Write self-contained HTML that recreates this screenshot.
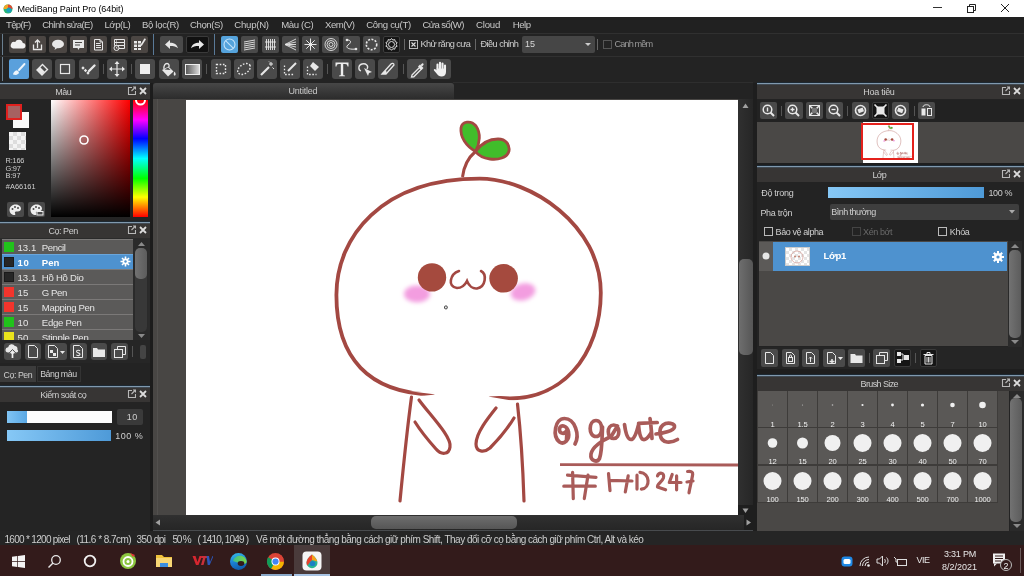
<!DOCTYPE html>
<html><head><meta charset="utf-8">
<style>
*{box-sizing:border-box;margin:0;padding:0}
body{width:1024px;height:576px;overflow:hidden;background:#222;position:relative;will-change:transform;font-family:"Liberation Sans",sans-serif;color:#d0d0d0}
.a{position:absolute;display:block}
.t{position:absolute;white-space:nowrap;line-height:1}
</style></head><body>
<div class="a" style="left:0px;top:0px;width:1024px;height:17px;background:#fff;"></div>
<svg class="a" style="left:3px;top:4px" width="10" height="10" viewBox="0 0 10 10"><circle cx="5" cy="5" r="4.5" fill="#2bb673"/><path d="M5 0.5 A4.5 4.5 0 0 1 9.5 5 L5 5Z" fill="#e8452c"/><path d="M0.5 5 A4.5 4.5 0 0 1 5 0.5 L5 5Z" fill="#f5a623"/><circle cx="6" cy="6" r="2.6" fill="#1aa0b8"/></svg>
<div class="t" style="left:17.5px;top:5.0px;font-size:9.0px;color:#000;;letter-spacing:-0.087px">MediBang Paint Pro (64bit)</div>
<div class="a" style="left:933px;top:7px;width:9px;height:1px;background:#333;"></div>
<svg class="a" style="left:966px;top:3px" width="11" height="10" viewBox="0 0 11 10"><rect x="1.5" y="3.5" width="6" height="6" fill="none" stroke="#222"/><path d="M3.5 3.5V1.5H9.5V7.5H7.5" fill="none" stroke="#222"/></svg>
<svg class="a" style="left:1000px;top:3px" width="10" height="10" viewBox="0 0 10 10"><path d="M1 1L9 9M9 1L1 9" stroke="#222" stroke-width="1"/></svg>
<div class="a" style="left:0px;top:17px;width:1024px;height:16px;background:#212121;"></div>
<div class="t" style="left:6.1px;top:20.3px;font-size:9.6px;color:#c8c8c8;;letter-spacing:-0.714px">Tệp(F)</div>
<div class="t" style="left:42.2px;top:20.3px;font-size:9.6px;color:#c8c8c8;;letter-spacing:-0.557px">Chỉnh sửa(E)</div>
<div class="t" style="left:104.5px;top:20.3px;font-size:9.6px;color:#c8c8c8;;letter-spacing:-0.484px">Lớp(L)</div>
<div class="t" style="left:142.0px;top:20.3px;font-size:9.6px;color:#c8c8c8;;letter-spacing:-0.343px">Bộ lọc(R)</div>
<div class="t" style="left:190.0px;top:20.3px;font-size:9.6px;color:#c8c8c8;;letter-spacing:-0.433px">Chọn(S)</div>
<div class="t" style="left:234.3px;top:20.3px;font-size:9.6px;color:#c8c8c8;;letter-spacing:-0.252px">Chụp(N)</div>
<div class="t" style="left:281.25px;top:20.3px;font-size:9.6px;color:#c8c8c8;;letter-spacing:-0.372px">Màu (C)</div>
<div class="t" style="left:325.0px;top:20.3px;font-size:9.6px;color:#c8c8c8;;letter-spacing:-0.494px">Xem(V)</div>
<div class="t" style="left:366.25px;top:20.3px;font-size:9.6px;color:#c8c8c8;;letter-spacing:-0.343px">Công cụ(T)</div>
<div class="t" style="left:422.5px;top:20.3px;font-size:9.6px;color:#c8c8c8;;letter-spacing:-0.626px">Cửa sổ(W)</div>
<div class="t" style="left:476.0px;top:20.3px;font-size:9.6px;color:#c8c8c8;;letter-spacing:-0.206px">Cloud</div>
<div class="t" style="left:512.75px;top:20.3px;font-size:9.6px;color:#c8c8c8;;letter-spacing:-0.484px">Help</div>
<div class="a" style="left:0px;top:33px;width:1024px;height:1px;background:#303030;"></div>
<div class="a" style="left:0px;top:34px;width:1024px;height:22px;background:#232323;"></div>
<div class="a" style="left:0px;top:56px;width:1024px;height:1px;background:#303030;"></div>
<div class="a" style="left:0px;top:57px;width:1024px;height:26px;background:#232323;"></div>
<div class="a" style="left:2px;top:34px;width:1px;height:21px;background:#6a7f90;"></div>
<div class="a" style="left:2px;top:57px;width:1px;height:24px;background:#6a7f90;"></div>
<div class="a" style="left:9px;top:36px;width:17px;height:17px;background:#4b4643;border-radius:2px;"></div><svg class="a" style="left:9px;top:36px" width="17" height="17" viewBox="0 0 17 17"><path d="M4 12.5h9.5a2.8 2.8 0 0 0 .3-5.6 a4 4 0 0 0-7.6-.8 a3.2 3.2 0 0 0-2.2 6.4z" fill="#f0f0f0"/></svg>
<div class="a" style="left:29px;top:36px;width:17px;height:17px;background:#4b4643;border-radius:2px;"></div><svg class="a" style="left:29px;top:36px" width="17" height="17" viewBox="0 0 17 17"><path d="M4.5 8.5v5h8v-5" stroke="#e8e8e8" fill="none" stroke-width="1.3"/><path d="M8.5 12V4M6 6.5l2.5-2.5 2.5 2.5" stroke="#e8e8e8" fill="none" stroke-width="1.3"/></svg>
<div class="a" style="left:49px;top:36px;width:18px;height:17px;background:#4b4643;border-radius:2px;"></div><svg class="a" style="left:49px;top:36px" width="18" height="17" viewBox="0 0 18 17"><ellipse cx="9" cy="8" rx="6" ry="4.3" fill="#e8e8e8"/><path d="M6.5 11l-1 3 3.5-2.5z" fill="#e8e8e8"/></svg>
<div class="a" style="left:70px;top:36px;width:17px;height:17px;background:#4b4643;border-radius:2px;"></div><svg class="a" style="left:70px;top:36px" width="17" height="17" viewBox="0 0 17 17"><rect x="3" y="4" width="11" height="8" fill="#e8e8e8"/><path d="M7.5 12l1 2 1-2z" fill="#e8e8e8"/><path d="M5 6.5h7M5 9h5" stroke="#4b4846" stroke-width="1"/></svg>
<div class="a" style="left:90px;top:36px;width:17px;height:17px;background:#4b4643;border-radius:2px;"></div><svg class="a" style="left:90px;top:36px" width="17" height="17" viewBox="0 0 17 17"><path d="M4.5 3.5h5.5l2.5 2.5v8h-8z" stroke="#e8e8e8" fill="none"/><path d="M10 3.5v2.5h2.5" stroke="#e8e8e8" fill="none"/><path d="M6 7.5h4.5M6 9.5h5M6 11.5h5" stroke="#e8e8e8" fill="none"/></svg>
<div class="a" style="left:111px;top:36px;width:17px;height:17px;background:#4b4643;border-radius:2px;"></div><svg class="a" style="left:111px;top:36px" width="17" height="17" viewBox="0 0 17 17"><path d="M3.5 3.5h10v3h-10zM3.5 6.5h10v3h-10zM7.5 9.5h6v3h-6" stroke="#e8e8e8" fill="none"/><path d="M5 5h1M5 8h1" stroke="#e8e8e8" fill="none"/><circle cx="5.5" cy="12" r="2.5" fill="#4b4643" stroke="#e8e8e8" fill="none"/><path d="M5.5 10.8v1.4h1" stroke="#e8e8e8" stroke-width="0.8" fill="none"/></svg>
<div class="a" style="left:131px;top:36px;width:17px;height:17px;background:#4b4643;border-radius:2px;"></div><svg class="a" style="left:131px;top:36px" width="17" height="17" viewBox="0 0 17 17"><path d="M3 5h3v2.5h-3zM7 5h3v2.5h-3zM3 8.5h3v2.5h-3zM7 8.5h3v2.5h-3zM3 12h3v2h-3zM7 12h3v2h-3z" fill="#e8e8e8"/><path d="M10 9.5l3.5-5.5" stroke="#e8e8e8" stroke-width="1.6"/><circle cx="13.8" cy="3.6" r="1" fill="#e8e8e8"/></svg>
<div class="a" style="left:153px;top:34px;width:1px;height:21px;background:#5a7a98;"></div>
<div class="a" style="left:160px;top:36px;width:23px;height:17px;background:#4a4a4a;border-radius:2px;"></div><svg class="a" style="left:160px;top:36px" width="23" height="17" viewBox="0 0 23 17"><path d="M5 8.5l5-4.5v2.8c4 0 7 1.6 8 5.5c-1.8-1.8-4-2.3-8-2.3v3z" fill="#e8e8e8"/></svg>
<div class="a" style="left:186px;top:36px;width:23px;height:17px;background:#111;border-radius:2px;border:1px solid #3a3a3a;"></div><svg class="a" style="left:186px;top:36px" width="23" height="17" viewBox="0 0 23 17"><path d="M18 8.5l-5-4.5v2.8c-4 0-7 1.6-8 5.5c1.8-1.8 4-2.3 8-2.3v3z" fill="#e8e8e8"/></svg>
<div class="a" style="left:214px;top:34px;width:1px;height:21px;background:#5a7a98;"></div>
<div class="a" style="left:221px;top:36px;width:17px;height:17px;background:#55a3dc;border-radius:2px;"></div><svg class="a" style="left:221px;top:36px" width="17" height="17" viewBox="0 0 17 17"><circle cx="8.5" cy="8.5" r="5.5" stroke="#c4e2fa" fill="none" stroke-width="1.1"/><path d="M4.8 4.8l7.4 7.4" stroke="#c4e2fa" stroke-width="1.1"/></svg>
<div class="a" style="left:241px;top:36px;width:17px;height:17px;background:#4a4a4a;border-radius:2px;"></div><svg class="a" style="left:241px;top:36px" width="17" height="17" viewBox="0 0 17 17"><path d="M3 6l11-2M3 8l11-2M3 10l11-2M3 12l11-2M3 14l11-2" stroke="#e8e8e8" fill="none" stroke-width="0.9"/></svg>
<div class="a" style="left:262px;top:36px;width:17px;height:17px;background:#4a4a4a;border-radius:2px;"></div><svg class="a" style="left:262px;top:36px" width="17" height="17" viewBox="0 0 17 17"><path d="M4.5 3v11M6.5 3v11M8.5 3v11M10.5 3v11M12.5 3v11M3 6h11M3 11h11" stroke="#e8e8e8" fill="none" stroke-width="0.9"/></svg>
<div class="a" style="left:282px;top:36px;width:17px;height:17px;background:#4a4a4a;border-radius:2px;"></div><svg class="a" style="left:282px;top:36px" width="17" height="17" viewBox="0 0 17 17"><path d="M3 8.5L14 3M3 8.5L14 6M3 8.5L14 11M3 8.5L14 14M3 8.5L14 8.5" stroke="#e8e8e8" fill="none" stroke-width="0.9"/></svg>
<div class="a" style="left:302px;top:36px;width:17px;height:17px;background:#4a4a4a;border-radius:2px;"></div><svg class="a" style="left:302px;top:36px" width="17" height="17" viewBox="0 0 17 17"><path d="M8.5 2.5v12M2.5 8.5h12M4.3 4.3l8.4 8.4M12.7 4.3l-8.4 8.4" stroke="#e8e8e8" fill="none" stroke-width="1"/></svg>
<div class="a" style="left:322px;top:36px;width:17px;height:17px;background:#4a4a4a;border-radius:2px;"></div><svg class="a" style="left:322px;top:36px" width="17" height="17" viewBox="0 0 17 17"><circle cx="9" cy="8.5" r="6" stroke="#e8e8e8" fill="none" stroke-width="0.9"/><circle cx="9" cy="8.5" r="4" stroke="#e8e8e8" fill="none" stroke-width="0.9"/><circle cx="9" cy="8.5" r="2" stroke="#e8e8e8" fill="none" stroke-width="0.9"/></svg>
<div class="a" style="left:343px;top:36px;width:17px;height:17px;background:#4a4a4a;border-radius:2px;"></div><svg class="a" style="left:343px;top:36px" width="17" height="17" viewBox="0 0 17 17"><path d="M4 4c5 0 4 3 1 5s0 5 8 4" stroke="#e8e8e8" fill="none" stroke-width="1"/><circle cx="4" cy="4" r="1.3" fill="#e8e8e8"/><circle cx="13" cy="13" r="1.3" fill="#e8e8e8"/></svg>
<div class="a" style="left:363px;top:36px;width:17px;height:17px;background:#4a4a4a;border-radius:2px;"></div><svg class="a" style="left:363px;top:36px" width="17" height="17" viewBox="0 0 17 17"><circle cx="8.5" cy="8.5" r="5.2" stroke="#e8e8e8" fill="none" stroke-width="1.6" stroke-dasharray="2 1.4"/></svg>
<div class="a" style="left:383px;top:36px;width:17px;height:17px;background:#151515;border-radius:2px;border:1px solid #3c3c3c;"></div><svg class="a" style="left:383px;top:36px" width="17" height="17" viewBox="0 0 17 17"><circle cx="8.5" cy="8.5" r="3" stroke="#ddd" fill="none"/><path d="M8.5 2.5l1.3 1.6 2-.5.4 2 1.9.9-1 1.9 1 1.9-1.9.9-.4 2-2-.5-1.3 1.6-1.3-1.6-2 .5-.4-2-1.9-.9 1-1.9-1-1.9 1.9-.9.4-2 2 .5z" stroke="#ddd" fill="none"/></svg>
<div class="a" style="left:404px;top:39px;width:1px;height:11px;background:#666;"></div>
<div class="a" style="left:409px;top:40px;width:9px;height:9px;border:1px solid #bbb"></div>
<svg class="a" style="left:409px;top:40px" width="9" height="9" viewBox="0 0 9 9"><path d="M2.5 2.5l4 4M6.5 2.5l-4 4" stroke="#ddd" stroke-width="1.1"/></svg>
<div class="t" style="left:420.5px;top:40.0px;font-size:9.2px;color:#d0d0d0;;letter-spacing:-0.579px">Khử răng cưa</div>
<div class="a" style="left:475px;top:39px;width:1px;height:11px;background:#666;"></div>
<div class="t" style="left:480.5px;top:40.0px;font-size:9.2px;color:#d0d0d0;;letter-spacing:-0.562px">Điều chỉnh</div>
<div class="a" style="left:522px;top:36px;width:73px;height:17px;background:#464646;border-radius:2px"></div>
<div class="t" style="left:525px;top:40.0px;font-size:9.0px;color:#d8d8d8;">15</div>
<svg class="a" style="left:584px;top:42px" width="8" height="5" viewBox="0 0 8 5"><path d="M1 1h6l-3 3z" fill="#ccc"/></svg>
<div class="a" style="left:597px;top:39px;width:1px;height:11px;background:#666;"></div>
<div class="a" style="left:603px;top:40px;width:9px;height:9px;border:1px solid #555"></div>
<div class="t" style="left:614.5px;top:40.0px;font-size:9.2px;color:#999;;letter-spacing:-0.892px">Canh mềm</div>
<div class="a" style="left:9px;top:59px;width:20px;height:20px;background:#5aa0dc;border-radius:2px;"></div><svg class="a" style="left:9px;top:59px" width="20" height="20" viewBox="0 0 20 20"><path d="M10 11L15.5 5" stroke="#eef5fc" stroke-width="1.9" stroke-linecap="round"/><path d="M4 15.5c.3-2 1.8-4 4-4.3l2 1.9c-.4 2.2-2.3 3.6-6 2.4z" fill="#eef5fc"/></svg>
<div class="a" style="left:32px;top:59px;width:20px;height:20px;background:#4a4a4a;border-radius:3px;"></div><svg class="a" style="left:32px;top:59px" width="20" height="20" viewBox="0 0 20 20"><path d="M10.5 5.5l5 5-5.5 5.5-5-5z" stroke="#e8e8e8" fill="none" stroke-width="1.4"/><path d="M5 11l3-3 4.8 4.8-3 3z" fill="#e8e8e8"/></svg>
<div class="a" style="left:55px;top:59px;width:20px;height:20px;background:#4a4a4a;border-radius:3px;"></div><svg class="a" style="left:55px;top:59px" width="20" height="20" viewBox="0 0 20 20"><rect x="5.5" y="5.5" width="9" height="9" stroke="#e8e8e8" fill="none" stroke-width="1.2"/></svg>
<div class="a" style="left:79px;top:59px;width:20px;height:20px;background:#4a4a4a;border-radius:3px;"></div><svg class="a" style="left:79px;top:59px" width="20" height="20" viewBox="0 0 20 20"><path d="M10 12L15.5 6.5" stroke="#e8e8e8" stroke-width="2.4" stroke-linecap="round"/><rect x="2.8" y="7.8" width="2.4" height="2.4" transform="rotate(45 4 9)" fill="#e8e8e8"/><rect x="5.3" y="10.3" width="2.4" height="2.4" transform="rotate(45 6.5 11.5)" fill="#e8e8e8"/><rect x="7.8" y="12.8" width="2.4" height="2.4" transform="rotate(45 9 14)" fill="#e8e8e8"/></svg>
<div class="a" style="left:107px;top:59px;width:20px;height:20px;background:#4a4a4a;border-radius:3px;"></div><svg class="a" style="left:107px;top:59px" width="20" height="20" viewBox="0 0 20 20"><path d="M10 3v14M3 10h14" stroke="#e8e8e8" fill="none" stroke-width="1.2"/><path d="M10 2l-2.5 3h5zM10 18l-2.5-3h5zM2 10l3-2.5v5zM18 10l-3-2.5v5z" fill="#e8e8e8"/></svg>
<div class="a" style="left:135px;top:59px;width:20px;height:20px;background:#4a4a4a;border-radius:3px;"></div><svg class="a" style="left:135px;top:59px" width="20" height="20" viewBox="0 0 20 20"><rect x="5" y="5" width="10" height="10" fill="#eee"/></svg>
<div class="a" style="left:159px;top:59px;width:20px;height:20px;background:#4a4a4a;border-radius:3px;"></div><svg class="a" style="left:159px;top:59px" width="20" height="20" viewBox="0 0 20 20"><path d="M3 11l6.5-3.5 5 5L9 17.5z" fill="#e8e8e8"/><path d="M5.5 10.5l3.5-2 2.5 2.6z" fill="#4a4a4a"/><path d="M5 10c-.5-3 1-5.5 3-5.5s2.5 2 1.8 3.5" stroke="#e8e8e8" fill="none" stroke-width="1.3"/><path d="M15.5 12.5c1.3 1.8 1.8 3.6.3 4.2-1.5-.3-1.3-2.4-.3-4.2z" fill="#e8e8e8"/></svg>
<div class="a" style="left:182px;top:59px;width:20px;height:20px;background:#4a4a4a;border-radius:3px;"></div><svg class="a" style="left:182px;top:59px" width="20" height="20" viewBox="0 0 20 20"><defs><linearGradient id="g1"><stop offset="0" stop-color="#555"/><stop offset="1" stop-color="#ddd"/></linearGradient></defs><rect x="3.5" y="5.5" width="14" height="10" fill="url(#g1)" stroke="#eee"/></svg>
<div class="a" style="left:211px;top:59px;width:20px;height:20px;background:#4a4a4a;border-radius:3px;"></div><svg class="a" style="left:211px;top:59px" width="20" height="20" viewBox="0 0 20 20"><rect x="5.5" y="5.5" width="9" height="9" stroke="#e8e8e8" fill="none" stroke-width="1.4" stroke-dasharray="1.6 1.6"/></svg>
<div class="a" style="left:234px;top:59px;width:20px;height:20px;background:#4a4a4a;border-radius:3px;"></div><svg class="a" style="left:234px;top:59px" width="20" height="20" viewBox="0 0 20 20"><ellipse cx="10" cy="10" rx="7" ry="4.5" transform="rotate(-35 10 10)" stroke="#e8e8e8" fill="none" stroke-width="1.4" stroke-dasharray="1.6 1.6"/></svg>
<div class="a" style="left:257px;top:59px;width:20px;height:20px;background:#4a4a4a;border-radius:3px;"></div><svg class="a" style="left:257px;top:59px" width="20" height="20" viewBox="0 0 20 20"><path d="M4 16L12 8" stroke="#e8e8e8" stroke-width="2.2"/><path d="M14 3v4M12 5h4M15.5 8.5l1.5 1.5M12 2.5l1 1" stroke="#e8e8e8" fill="none"/></svg>
<div class="a" style="left:280px;top:59px;width:20px;height:20px;background:#4a4a4a;border-radius:3px;"></div><svg class="a" style="left:280px;top:59px" width="20" height="20" viewBox="0 0 20 20"><path d="M4.5 6.5v9h9" stroke="#e8e8e8" fill="none" stroke-width="1.3" stroke-dasharray="1.6 1.6"/><path d="M8 12L16 4" stroke="#e8e8e8" stroke-width="2"/></svg>
<div class="a" style="left:303px;top:59px;width:20px;height:20px;background:#4a4a4a;border-radius:3px;"></div><svg class="a" style="left:303px;top:59px" width="20" height="20" viewBox="0 0 20 20"><path d="M4.5 7.5v8h9" stroke="#e8e8e8" fill="none" stroke-width="1.3" stroke-dasharray="1.6 1.6"/><path d="M10 3l6 5-4 4-5-5z" fill="#e8e8e8"/></svg>
<div class="a" style="left:332px;top:59px;width:20px;height:20px;background:#4a4a4a;border-radius:3px;"></div><svg class="a" style="left:332px;top:59px" width="20" height="20" viewBox="0 0 20 20"><path d="M3.5 3.5h13v4h-1c-.3-1.8-.8-2.5-2.5-2.5h-1.8v10.5c0 .8.4 1 1.8 1v.8h-6v-.8c1.4 0 1.8-.2 1.8-1V5h-1.8c-1.7 0-2.2.7-2.5 2.5h-1z" fill="#eee"/></svg>
<div class="a" style="left:355px;top:59px;width:20px;height:20px;background:#4a4a4a;border-radius:3px;"></div><svg class="a" style="left:355px;top:59px" width="20" height="20" viewBox="0 0 20 20"><path d="M6 12c-3-1-3-6 1-7 4-1 7 2 5 5" stroke="#e8e8e8" fill="none" stroke-width="1.3"/><path d="M9 9l8 4-3 1-1 3z" fill="#e8e8e8"/></svg>
<div class="a" style="left:378px;top:59px;width:20px;height:20px;background:#4a4a4a;border-radius:3px;"></div><svg class="a" style="left:378px;top:59px" width="20" height="20" viewBox="0 0 20 20"><path d="M4 15l9-10c1-1 3-1 3 1l-8 9z" stroke="#e8e8e8" fill="none" stroke-width="1.3"/><path d="M4 15l4-4 1 4z" fill="#e8e8e8"/></svg>
<div class="a" style="left:407px;top:59px;width:20px;height:20px;background:#4a4a4a;border-radius:3px;"></div><svg class="a" style="left:407px;top:59px" width="20" height="20" viewBox="0 0 20 20"><path d="M5 16l7.5-7.5 1.8 1.8L6.8 17.8 4.5 18z" stroke="#e8e8e8" fill="none" stroke-width="1.3"/><path d="M11 7.5l2-2 3.5 3.5-2 2z" fill="#e8e8e8"/><path d="M13.5 6l1.5-1.5c.8-.8 2.2.6 1.4 1.4L15 7.5z" fill="#e8e8e8"/></svg>
<div class="a" style="left:430px;top:59px;width:21px;height:20px;background:#4a4a4a;border-radius:3px;"></div><svg class="a" style="left:430px;top:59px" width="21" height="20" viewBox="0 0 21 20"><path d="M7.5 10V5.5M10 9.5V3.8M12.5 9.5V4.5M15 10.5V6.5" stroke="#f0f0f0" stroke-width="2.1" stroke-linecap="round"/><path d="M6.5 9.5h9.5v3.5c0 3-2 4.5-4.5 4.5c-2.2 0-3.5-1-4.5-2.5L4 11.5c-.6-1 .4-2 1.4-1.3l1.1 1z" fill="#f0f0f0"/></svg>
<div class="a" style="left:103px;top:64px;width:1px;height:10px;background:#555;"></div>
<div class="a" style="left:131px;top:64px;width:1px;height:10px;background:#555;"></div>
<div class="a" style="left:206px;top:64px;width:1px;height:10px;background:#555;"></div>
<div class="a" style="left:327px;top:64px;width:1px;height:10px;background:#555;"></div>
<div class="a" style="left:403px;top:64px;width:1px;height:10px;background:#555;"></div>
<div class="a" style="left:0px;top:83px;width:150px;height:448px;background:#242424;"></div>
<div class="a" style="left:150px;top:83px;width:3px;height:448px;background:#1c1c1c;"></div>
<div class="a" style="left:0px;top:82px;width:150px;height:1px;background:#1d2933;"></div>
<div class="a" style="left:0px;top:84px;width:150px;height:15px;background:#373534;"></div>
<div class="a" style="left:0px;top:83px;width:150px;height:1px;background:#8099ae;"></div>
<div class="a" style="left:0px;top:84px;width:150px;height:1px;background:#414a53;"></div>
<div class="t" style="left:55.3px;top:87.5px;font-size:9.0px;color:#cfcfcf;;letter-spacing:-0.472px">Màu</div>
<svg class="a" style="left:127px;top:86px" width="9" height="9" viewBox="0 0 9 9"><path d="M5 1.5h-3.5v7h7v-3.5" stroke="#b8b8b8" fill="none" stroke-width="1.1"/><path d="M4.5 5L8 1.5M6 1h2.5v2.5" stroke="#b8b8b8" fill="none" stroke-width="1.1"/></svg>
<svg class="a" style="left:139px;top:86.5px" width="8" height="8" viewBox="0 0 8 8"><path d="M1 1l6 6M7 1l-6 6" stroke="#dcdcdc" stroke-width="1.8"/></svg>
<div class="a" style="left:13px;top:112px;width:16px;height:16px;background:#fafafa;"></div>
<div class="a" style="left:6px;top:104px;width:16px;height:16px;background:#A66161;border:2px solid #e0201e"></div>
<div class="a" style="left:9px;top:132px;width:17px;height:18px;background:#f4f4f4;background-image:linear-gradient(45deg,#ddd 25%,transparent 25%,transparent 75%,#ddd 75%),linear-gradient(45deg,#ddd 25%,transparent 25%,transparent 75%,#ddd 75%);background-size:8px 8px;background-position:0 0,4px 4px"></div>
<div class="t" style="left:5.5px;top:157.0px;font-size:7.4px;color:#cfcfcf;;letter-spacing:-0.187px">R:166</div>
<div class="t" style="left:5.5px;top:164.7px;font-size:7.4px;color:#cfcfcf;;letter-spacing:-0.258px">G:97</div>
<div class="t" style="left:5.5px;top:172.4px;font-size:7.4px;color:#cfcfcf;;letter-spacing:-0.055px">B:97</div>
<div class="t" style="left:5.8px;top:183.0px;font-size:7.4px;color:#cfcfcf;;letter-spacing:0.029px">#A66161</div>
<div class="a" style="left:7px;top:202px;width:17px;height:15px;background:#4a4a4a;border-radius:2px;"></div><svg class="a" style="left:7px;top:202px" width="17" height="15" viewBox="0 0 17 15"><path d="M8.5 2.5c-3.5 0-6 2.5-6 5.5 0 3 2.5 5 5 5 1 0 1-1 .5-1.8-.4-.8.2-1.6 1-1.6h1.7c2 0 3.3-1.2 3.3-3 0-2.4-2.4-4.1-5.5-4.1z" fill="#eee"/><circle cx="5.5" cy="7" r="1" fill="#4a4a4a"/><circle cx="8" cy="5" r="1" fill="#4a4a4a"/><circle cx="11" cy="6" r="1" fill="#4a4a4a"/></svg>
<div class="a" style="left:28px;top:202px;width:17px;height:15px;background:#4a4a4a;border-radius:2px;"></div><svg class="a" style="left:28px;top:202px" width="17" height="15" viewBox="0 0 17 15"><path d="M8.5 2.5c-3.5 0-6 2.5-6 5.5 0 3 2.5 5 5 5 1 0 1-1 .5-1.8-.4-.8.2-1.6 1-1.6h1.7c2 0 3.3-1.2 3.3-3 0-2.4-2.4-4.1-5.5-4.1z" fill="#eee"/><circle cx="5.5" cy="7" r="1" fill="#4a4a4a"/><circle cx="8" cy="5" r="1" fill="#4a4a4a"/><circle cx="11" cy="6" r="1" fill="#4a4a4a"/><rect x="9" y="9.5" width="6" height="3.5" fill="#4a4a4a" stroke="#eee" stroke-width="1"/></svg>
<div class="a" style="left:51px;top:100px;width:79px;height:117px;background:linear-gradient(to bottom,rgba(0,0,0,0),#000),linear-gradient(to right,#fff,#f00)"></div>
<svg class="a" style="left:78px;top:134px" width="12" height="12" viewBox="0 0 12 12"><circle cx="6" cy="6" r="4" stroke="#fff" stroke-width="1.6" fill="none"/></svg>
<div class="a" style="left:133px;top:100px;width:15px;height:117px;background:linear-gradient(to bottom,#f00 0%,#f0f 17%,#00f 33%,#0ff 50%,#0f0 67%,#ff0 83%,#f00 100%)"></div>
<div class="a" style="left:133px;top:100px;width:15px;height:117px;overflow:hidden"><svg class="a" style="left:0;top:-6px" width="15" height="14"><circle cx="7.5" cy="6" r="4.5" stroke="#fff" stroke-width="2" fill="none"/></svg></div>
<div class="a" style="left:0px;top:221px;width:150px;height:1px;background:#1d2933;"></div>
<div class="a" style="left:0px;top:223px;width:150px;height:15px;background:#373534;"></div>
<div class="a" style="left:0px;top:222px;width:150px;height:1px;background:#8099ae;"></div>
<div class="a" style="left:0px;top:223px;width:150px;height:1px;background:#414a53;"></div>
<div class="t" style="left:48.5px;top:226.5px;font-size:9.0px;color:#cfcfcf;;letter-spacing:-0.476px">Cọ: Pen</div>
<svg class="a" style="left:127px;top:225px" width="9" height="9" viewBox="0 0 9 9"><path d="M5 1.5h-3.5v7h7v-3.5" stroke="#b8b8b8" fill="none" stroke-width="1.1"/><path d="M4.5 5L8 1.5M6 1h2.5v2.5" stroke="#b8b8b8" fill="none" stroke-width="1.1"/></svg>
<svg class="a" style="left:139px;top:225.5px" width="8" height="8" viewBox="0 0 8 8"><path d="M1 1l6 6M7 1l-6 6" stroke="#dcdcdc" stroke-width="1.8"/></svg>
<div class="a" style="left:0px;top:238px;width:150px;height:104px;background:#2b2b2b;"></div>
<div class="a" style="left:2px;top:239px;width:131px;height:101px;overflow:hidden">
<div class="a" style="left:0;top:0px;width:131px;height:15px;background:#5b5a59;border-top:1px solid #7b7978"></div>
<div class="a" style="left:2px;top:3px;width:10px;height:10px;background:#21c21b;"></div>
<div class="t" style="left:15.5px;top:3.5px;font-size:9.6px;color:#e6e6e6;;letter-spacing:0.028px">13.1</div>
<div class="t" style="left:39.8px;top:3.5px;font-size:9.6px;color:#e6e6e6;;letter-spacing:-0.390px">Pencil</div>
<div class="a" style="left:0;top:15px;width:131px;height:15px;background:#4e92cf;border-top:1px solid #6aa6dc"></div>
<div class="a" style="left:2px;top:18px;width:10px;height:10px;background:#262626;border:1px solid #1a1a1a"></div>
<div class="t" style="left:15.5px;top:18.5px;font-size:9.6px;color:#ffffff;font-weight:bold;;letter-spacing:0.689px">10</div>
<div class="t" style="left:39.8px;top:18.5px;font-size:9.6px;color:#ffffff;font-weight:bold;;letter-spacing:-0.020px">Pen</div>
<svg class="a" style="left:118px;top:17px" width="11" height="11" viewBox="0 0 11 11"><circle cx="5.5" cy="5.5" r="3" fill="#fff"/><path d="M5.5 0.5v10M0.5 5.5h10M2 2l7 7M9 2l-7 7" stroke="#fff" stroke-width="1.6"/><circle cx="5.5" cy="5.5" r="1.2" fill="#4e92cf"/></svg>
<div class="a" style="left:0;top:30px;width:131px;height:15px;background:#5b5a59;border-top:1px solid #7b7978"></div>
<div class="a" style="left:2px;top:33px;width:10px;height:10px;background:#262626;border:1px solid #1a1a1a"></div>
<div class="t" style="left:15.5px;top:33.5px;font-size:9.6px;color:#e6e6e6;;letter-spacing:0.028px">13.1</div>
<div class="t" style="left:39.8px;top:33.5px;font-size:9.6px;color:#e6e6e6;;letter-spacing:-0.274px">Hồ Hồ Dio</div>
<div class="a" style="left:0;top:45px;width:131px;height:15px;background:#5b5a59;border-top:1px solid #7b7978"></div>
<div class="a" style="left:2px;top:48px;width:10px;height:10px;background:#f2342c;"></div>
<div class="t" style="left:15.5px;top:48.5px;font-size:9.6px;color:#e6e6e6;;letter-spacing:0.264px">15</div>
<div class="t" style="left:39.8px;top:48.5px;font-size:9.6px;color:#e6e6e6;;letter-spacing:-0.441px">G Pen</div>
<div class="a" style="left:0;top:60px;width:131px;height:15px;background:#5b5a59;border-top:1px solid #7b7978"></div>
<div class="a" style="left:2px;top:63px;width:10px;height:10px;background:#f2342c;"></div>
<div class="t" style="left:15.5px;top:63.5px;font-size:9.6px;color:#e6e6e6;;letter-spacing:0.264px">15</div>
<div class="t" style="left:39.8px;top:63.5px;font-size:9.6px;color:#e6e6e6;;letter-spacing:-0.341px">Mapping Pen</div>
<div class="a" style="left:0;top:75px;width:131px;height:15px;background:#5b5a59;border-top:1px solid #7b7978"></div>
<div class="a" style="left:2px;top:78px;width:10px;height:10px;background:#21c21b;"></div>
<div class="t" style="left:15.5px;top:78.5px;font-size:9.6px;color:#e6e6e6;;letter-spacing:0.264px">10</div>
<div class="t" style="left:39.8px;top:78.5px;font-size:9.6px;color:#e6e6e6;;letter-spacing:-0.295px">Edge Pen</div>
<div class="a" style="left:0;top:90px;width:131px;height:15px;background:#5b5a59;border-top:1px solid #7b7978"></div>
<div class="a" style="left:2px;top:93px;width:10px;height:10px;background:#e9e21c;"></div>
<div class="t" style="left:15.5px;top:93.5px;font-size:9.6px;color:#e6e6e6;;letter-spacing:0.264px">50</div>
<div class="t" style="left:39.8px;top:93.5px;font-size:9.6px;color:#e6e6e6;;letter-spacing:-0.207px">Stipple Pen</div>
</div>
<div class="a" style="left:134px;top:239px;width:14px;height:101px;background:#2a2a2a;"></div>
<svg class="a" style="left:137px;top:241px" width="9" height="6" viewBox="0 0 9 6"><path d="M1 5h7L4.5 1z" fill="#8a8a8a"/></svg>
<div class="a" style="left:135px;top:249px;width:12px;height:83px;background:#383838;border-radius:5px"></div>
<div class="a" style="left:135px;top:248px;width:12px;height:31px;background:linear-gradient(to right,#727272,#5c5c5c);border-radius:5px"></div>
<svg class="a" style="left:137px;top:333px" width="9" height="6" viewBox="0 0 9 6"><path d="M1 1h7L4.5 5z" fill="#8a8a8a"/></svg>
<div class="a" style="left:0px;top:340px;width:150px;height:23px;background:#262626;"></div>
<div class="a" style="left:4px;top:343px;width:17px;height:17px;background:#4a4a4a;border-radius:3px;"></div><svg class="a" style="left:4px;top:343px" width="17" height="17" viewBox="0 0 17 17"><path d="M4 9.5a2.6 2.6 0 0 1 .2-5.2a3.5 3.5 0 0 1 6.6-1.2a2.6 2.6 0 0 1 2.6 3.3a2 2 0 0 1-.6 3.1z" fill="#e8e8e8"/><path d="M8.5 6.5l-4 4.3h2.6v4.7h2.8v-4.7h2.6z" fill="#eee" stroke="#4a4a4a" stroke-width="1"/></svg>
<div class="a" style="left:25px;top:343px;width:16px;height:17px;background:#4a4a4a;border-radius:3px;"></div><svg class="a" style="left:25px;top:343px" width="16" height="17" viewBox="0 0 16 17"><path d="M3.5 2.5h6l3 3v9h-9z" stroke="#e8e8e8" fill="none"/></svg>
<div class="a" style="left:45px;top:343px;width:22px;height:17px;background:#4a4a4a;border-radius:3px;"></div><svg class="a" style="left:45px;top:343px" width="22" height="17" viewBox="0 0 22 17"><path d="M3.5 2.5h6l3 3v9h-9z" stroke="#e8e8e8" fill="none"/><rect x="5" y="7" width="3" height="3" fill="#e8e8e8"/><rect x="8" y="10" width="3" height="3" fill="#e8e8e8"/><path d="M15 8h5l-2.5 3z" fill="#e8e8e8"/></svg>
<div class="a" style="left:70px;top:343px;width:17px;height:17px;background:#4a4a4a;border-radius:3px;"></div><svg class="a" style="left:70px;top:343px" width="17" height="17" viewBox="0 0 17 17"><path d="M3.5 2.5h6l3 3v9h-9z" stroke="#e8e8e8" fill="none"/><path d="M10 8c-.5-1-3.5-1.2-3.5.5s3.5 1 3.5 2.8-3 1.6-3.6.5" stroke="#e8e8e8" fill="none" stroke-width="1.1"/></svg>
<div class="a" style="left:91px;top:343px;width:16px;height:17px;background:#4a4a4a;border-radius:3px;"></div><svg class="a" style="left:91px;top:343px" width="16" height="17" viewBox="0 0 16 17"><path d="M2 5h4l1 1.5h7v7.5h-12z" fill="#e8e8e8"/></svg>
<div class="a" style="left:111px;top:343px;width:17px;height:17px;background:#4a4a4a;border-radius:3px;"></div><svg class="a" style="left:111px;top:343px" width="17" height="17" viewBox="0 0 17 17"><rect x="3.5" y="6.5" width="8" height="8" stroke="#e8e8e8" fill="none"/><path d="M6.5 6.5v-3h8v8h-3" stroke="#e8e8e8" fill="none"/></svg>
<div class="a" style="left:132px;top:346px;width:1px;height:11px;background:#555;"></div>
<div class="a" style="left:140px;top:345px;width:6px;height:14px;background:#444;border-radius:2px"></div>
<div class="a" style="left:0px;top:363px;width:150px;height:23px;background:#232323;"></div>
<div class="a" style="left:0px;top:366px;width:36px;height:16px;background:#3c3c3c;"></div>
<div class="t" style="left:3.5px;top:370.5px;font-size:8.8px;color:#cfcfcf;;letter-spacing:-0.428px">Cọ: Pen</div>
<div class="a" style="left:37px;top:366px;width:44px;height:16px;background:#262626;border:1px solid #333"></div>
<div class="t" style="left:40.2px;top:369.5px;font-size:8.8px;color:#cfcfcf;;letter-spacing:-0.464px">Bảng màu</div>
<div class="a" style="left:0px;top:385px;width:150px;height:1px;background:#1d2933;"></div>
<div class="a" style="left:0px;top:387px;width:150px;height:15px;background:#373534;"></div>
<div class="a" style="left:0px;top:386px;width:150px;height:1px;background:#8099ae;"></div>
<div class="a" style="left:0px;top:387px;width:150px;height:1px;background:#414a53;"></div>
<div class="t" style="left:40.2px;top:390.5px;font-size:9.0px;color:#cfcfcf;;letter-spacing:-0.494px">Kiểm soát cọ</div>
<svg class="a" style="left:127px;top:389px" width="9" height="9" viewBox="0 0 9 9"><path d="M5 1.5h-3.5v7h7v-3.5" stroke="#b8b8b8" fill="none" stroke-width="1.1"/><path d="M4.5 5L8 1.5M6 1h2.5v2.5" stroke="#b8b8b8" fill="none" stroke-width="1.1"/></svg>
<svg class="a" style="left:139px;top:389.5px" width="8" height="8" viewBox="0 0 8 8"><path d="M1 1l6 6M7 1l-6 6" stroke="#dcdcdc" stroke-width="1.8"/></svg>
<div class="a" style="left:7px;top:411px;width:105px;height:12px;background:#fcfcfc"></div>
<div class="a" style="left:7px;top:411px;width:20px;height:12px;background:linear-gradient(to right,#80c4f4,#5aa8e4)"></div>
<div class="a" style="left:117px;top:409px;width:26px;height:16px;background:#3a3a3a;border-radius:2px"></div>
<div class="t" style="left:126.8px;top:413.0px;font-size:9.0px;color:#cfcfcf;;letter-spacing:0.492px">10</div>
<div class="a" style="left:7px;top:430px;width:104px;height:11px;background:linear-gradient(to right,#86c8f6,#4e9ad8)"></div>
<div class="t" style="left:115.2px;top:432.0px;font-size:9.0px;color:#cfcfcf;;letter-spacing:0.534px">100 %</div>
<div class="a" style="left:153px;top:83px;width:600px;height:16px;background:#232323;"></div>
<div class="a" style="left:453px;top:82px;width:300px;height:1px;background:#2e2e2e;"></div>
<div class="a" style="left:153px;top:83px;width:301px;height:16px;background:linear-gradient(to bottom,#474747,#2c2c2c);border-radius:3px 3px 0 0"></div>
<div class="t" style="left:288.5px;top:87.0px;font-size:9.0px;color:#c8c8c8;;letter-spacing:-0.202px">Untitled</div>
<div class="a" style="left:153px;top:99px;width:585px;height:416px;background:#484644;"></div>
<div class="a" style="left:157px;top:99px;width:1px;height:416px;background:#52504e;"></div>
<div class="a" style="left:186px;top:100px;width:552px;height:415px;background:#ffffff;"></div>
<svg class="a" style="left:186px;top:100px" width="552" height="415" viewBox="186 100 552 415"><defs><filter id="bl" x="-50%" y="-50%" width="200%" height="200%"><feGaussianBlur stdDeviation="2.2"/></filter></defs><ellipse cx="417" cy="294" rx="13" ry="8.5" fill="#f39de0" filter="url(#bl)"/><ellipse cx="523" cy="292" rx="12.5" ry="8.5" fill="#f39de0" transform="rotate(-15 523 292)" filter="url(#bl)"/><path d="M432.7 394.6 C368.8 392.9, 336.4 358.2, 336.4 295.1 C336.4 236.9, 381.4 178.6, 479.7 178.6 C530.5 178.6, 600.8 224.8, 600.8 292.7 C600.8 352.5, 562.9 408.6, 490.7 396.6" stroke="#a34842" stroke-width="3.8" fill="none" stroke-linecap="round"/><path d="M410 391.2 L436 392.3 L436 394.6 Z M410 396.9 L436 397.2 L436 394.6 Z" fill="#fff"/><path d="M516 395.3 L488 393.2 L488 396.6 Z M516 401.3 L488 400 L488 396.6 Z" fill="#fff"/><path d="M462.5 177 C464 165, 469 157, 475.5 151.5" stroke="#a34842" stroke-width="3" fill="none"/><path d="M475.5 151.5 C466 146, 460 137, 461 128 C462 121, 471 120, 476 126 C481 133, 480 143, 475.5 151.5Z" fill="#41bd2b" stroke="#a34842" stroke-width="2.8"/><path d="M475.5 151.5 C481 144, 489 139, 498 139 C506 139, 510 145, 509 151 C507 158, 498 160, 490 159 C483 158, 478 155, 475.5 151.5Z" fill="#41bd2b" stroke="#a34842" stroke-width="2.8"/><circle cx="432" cy="277.4" r="14.2" fill="#a54a3e"/><circle cx="503.6" cy="278.3" r="14.3" fill="#a54a3e"/><path d="M459 271 C450 274, 447 287, 457 288 C463 288, 466 283, 467 281 C469 286, 473 289, 477 288.5 C486 287, 487 274, 481 271" stroke="#a34842" stroke-width="2.6" fill="none" stroke-linecap="round"/><path d="M411.5 397 C407 430, 403 470, 400 501" stroke="#a34842" stroke-width="3.2" fill="none" stroke-linecap="round"/><path d="M517.5 404 C521 435, 523 470, 524 501" stroke="#a34842" stroke-width="3.2" fill="none" stroke-linecap="round"/><path d="M419 400 C430 415, 452 437, 450 447 C449 455, 441 455, 436 449 C428 440, 420 430, 415 422" stroke="#a34842" stroke-width="3.2" fill="none" stroke-linecap="round"/><path d="M496 408 C488 418, 476 433, 476 444 C476 452, 484 453, 490 448 C498 440, 508 428, 514 418" stroke="#a34842" stroke-width="3.2" fill="none" stroke-linecap="round"/><path d="M575 444 C580 435, 575 418.5, 564.5 418.5 C555 418.5, 552 436, 559.5 442 C564 445, 570 440, 568.5 432 C567 425, 560 424, 559.5 429 C559 434, 565 435, 567 430 L566.5 440" stroke="#a95b59" stroke-width="3.7" fill="none" stroke-linecap="round" stroke-linejoin="round"/><path d="M596 420.5 C588.5 420.5, 588 436.5, 596 436.5 C603.5 436.5, 603.5 420.5, 596 420.5Z" stroke="#a95b59" stroke-width="3.7" fill="none" stroke-linecap="round" stroke-linejoin="round"/><path d="M602.5 427 C602 440, 602 452, 599.5 458.5 C597 463, 590 461, 591 454 C592 447, 603 440, 609 437.5" stroke="#a95b59" stroke-width="3.7" fill="none" stroke-linecap="round" stroke-linejoin="round"/><path d="M613.7 425 C606.5 425, 606.5 438.5, 613.7 438.5 C620.5 438.5, 620.5 425, 613.7 425Z M610.5 437.5 L617.5 426" stroke="#a95b59" stroke-width="3.7" fill="none" stroke-linecap="round" stroke-linejoin="round"/><path d="M624.5 424.5 C625.5 432, 627.5 439.5, 631 439.5 C634.5 439.5, 637 431, 638.5 425 C639 431, 640 439, 643.5 439.5 C646.5 440, 649 436, 651 433" stroke="#a95b59" stroke-width="3.7" fill="none" stroke-linecap="round" stroke-linejoin="round"/><path d="M650 418.5 C651 425, 651.5 432, 652 438.5 M638.6 423.4 L657.2 422.5" stroke="#a95b59" stroke-width="3.7" fill="none" stroke-linecap="round" stroke-linejoin="round"/><path d="M656 434 C662 433.5, 674 431, 674.5 427 C675 423, 667 422, 663 425 C658 429, 659 441, 667 442 C671 442.5, 675 441, 677.5 439.5" stroke="#a95b59" stroke-width="3.7" fill="none" stroke-linecap="round" stroke-linejoin="round"/><path d="M560 464.6 L738 465" stroke="#a95b59" stroke-width="2.8"/><path d="M567.5 475.2 L596 477.4 M563.8 486.2 L595.3 486.2 M572.6 472.3 L573.3 498.6 M588 475.2 L584.3 498.6" stroke="#a95b59" stroke-width="3.2" fill="none" stroke-linecap="round" stroke-linejoin="round"/><path d="M608.5 473.7 L610 490.6 M609.2 480.3 L632 481 M628.2 475.9 L625.3 492" stroke="#a95b59" stroke-width="3.2" fill="none" stroke-linecap="round" stroke-linejoin="round"/><path d="M637 475.2 L637 489.1 M640 472.3 C650 473, 651 488, 641.4 489.1" stroke="#a95b59" stroke-width="3.2" fill="none" stroke-linecap="round" stroke-linejoin="round"/><path d="M657.5 475.9 C659 472, 665 472, 663.4 478 C662 482, 657 484, 657.5 486.9 L665.6 489.8" stroke="#a95b59" stroke-width="3.2" fill="none" stroke-linecap="round" stroke-linejoin="round"/><path d="M672.2 474.5 L669.3 482.5 L681 482.5 M676.6 475.9 L676.6 489.8" stroke="#a95b59" stroke-width="3.2" fill="none" stroke-linecap="round" stroke-linejoin="round"/><path d="M687.6 471.5 C691 471, 693 472, 692.7 474 C692 480, 690 486, 689 492.8 M687 482 L693 481" stroke="#a95b59" stroke-width="3.2" fill="none" stroke-linecap="round" stroke-linejoin="round"/><rect x="444.6" y="306" width="2.6" height="2.8" rx="0.8" fill="none" stroke="#222" stroke-width="0.9"/></svg>
<div class="a" style="left:738px;top:99px;width:15px;height:416px;background:linear-gradient(to right,#303030,#262626);"></div>
<svg class="a" style="left:741px;top:102px" width="9" height="7" viewBox="0 0 9 7"><path d="M1.5 6h6L4.5 1.5z" fill="#a0a0a0"/></svg>
<div class="a" style="left:739px;top:259px;width:14px;height:96px;background:linear-gradient(to right,#6e6e6e,#565656);border-radius:5px"></div>
<div class="a" style="left:738px;top:505px;width:15px;height:10px;background:#1e1e1e;"></div>
<svg class="a" style="left:741px;top:507px" width="9" height="7" viewBox="0 0 9 7"><path d="M1.5 1.5h6L4.5 6z" fill="#a0a0a0"/></svg>
<div class="a" style="left:153px;top:515px;width:600px;height:15px;background:linear-gradient(#303030,#262626);"></div>
<div class="a" style="left:153px;top:530px;width:600px;height:1px;background:#484b4e;"></div>
<svg class="a" style="left:154px;top:518px" width="8" height="9" viewBox="0 0 8 9"><path d="M6 1.5v6L1.5 4.5z" fill="#a0a0a0"/></svg>
<div class="a" style="left:371px;top:516px;width:146px;height:13px;background:linear-gradient(#6e6e6e,#565656);border-radius:5px"></div>
<div class="a" style="left:744px;top:515px;width:9px;height:15px;background:#1e1e1e;"></div>
<svg class="a" style="left:745px;top:518px" width="8" height="9" viewBox="0 0 8 9"><path d="M1.5 1.5v6L6 4.5z" fill="#a0a0a0"/></svg>
<div class="a" style="left:753px;top:83px;width:4px;height:448px;background:#1e1e1e;"></div>
<div class="a" style="left:757px;top:83px;width:267px;height:448px;background:#232323;"></div>
<div class="a" style="left:757px;top:82px;width:267px;height:1px;background:#1d2933;"></div>
<div class="a" style="left:757px;top:84px;width:267px;height:15px;background:#373534;"></div>
<div class="a" style="left:757px;top:83px;width:267px;height:1px;background:#8099ae;"></div>
<div class="a" style="left:757px;top:84px;width:267px;height:1px;background:#414a53;"></div>
<div class="t" style="left:863.3px;top:87.5px;font-size:9.0px;color:#cfcfcf;;letter-spacing:-0.279px">Hoa tiêu</div>
<svg class="a" style="left:1001px;top:86px" width="9" height="9" viewBox="0 0 9 9"><path d="M5 1.5h-3.5v7h7v-3.5" stroke="#b8b8b8" fill="none" stroke-width="1.1"/><path d="M4.5 5L8 1.5M6 1h2.5v2.5" stroke="#b8b8b8" fill="none" stroke-width="1.1"/></svg>
<svg class="a" style="left:1013px;top:86.5px" width="8" height="8" viewBox="0 0 8 8"><path d="M1 1l6 6M7 1l-6 6" stroke="#dcdcdc" stroke-width="1.8"/></svg>
<div class="a" style="left:757px;top:100px;width:267px;height:22px;background:#222;"></div>
<div class="a" style="left:760px;top:102px;width:17px;height:17px;background:#4a4a4a;border-radius:2px;"></div><svg class="a" style="left:760px;top:102px" width="17" height="17" viewBox="0 0 17 17"><circle cx="7.5" cy="7.5" r="4.3" stroke="#e8e8e8" fill="none" stroke-width="1.5"/><path d="M10.5 10.5l3.5 3.5" stroke="#e8e8e8" stroke-width="2"/><path d="M7.5 5.5v4" stroke="#e8e8e8" stroke-width="1.4"/></svg>
<div class="a" style="left:785px;top:102px;width:18px;height:17px;background:#4a4a4a;border-radius:2px;"></div><svg class="a" style="left:785px;top:102px" width="18" height="17" viewBox="0 0 18 17"><circle cx="7.5" cy="7.5" r="4.3" stroke="#e8e8e8" fill="none" stroke-width="1.5"/><path d="M10.5 10.5l3.5 3.5" stroke="#e8e8e8" stroke-width="2"/><path d="M5.5 7.5h4M7.5 5.5v4" stroke="#e8e8e8" stroke-width="1.3"/></svg>
<div class="a" style="left:806px;top:102px;width:17px;height:17px;background:#4a4a4a;border-radius:2px;"></div><svg class="a" style="left:806px;top:102px" width="17" height="17" viewBox="0 0 17 17"><rect x="3.5" y="3.5" width="10" height="10" fill="none" stroke="#e8e8e8"/><path d="M3.5 3.5l3 3M13.5 3.5l-3 3M3.5 13.5l3-3M13.5 13.5l-3-3" stroke="#e8e8e8" stroke-width="1.5"/><rect x="6" y="6" width="5" height="5" fill="#777"/></svg>
<div class="a" style="left:826px;top:102px;width:17px;height:17px;background:#4a4a4a;border-radius:2px;"></div><svg class="a" style="left:826px;top:102px" width="17" height="17" viewBox="0 0 17 17"><circle cx="7.5" cy="7.5" r="4.3" stroke="#e8e8e8" fill="none" stroke-width="1.5"/><path d="M10.5 10.5l3.5 3.5" stroke="#e8e8e8" stroke-width="2"/><path d="M5.5 7.5h4" stroke="#e8e8e8" stroke-width="1.3"/></svg>
<div class="a" style="left:852px;top:102px;width:17px;height:17px;background:#4a4a4a;border-radius:2px;"></div><svg class="a" style="left:852px;top:102px" width="17" height="17" viewBox="0 0 17 17"><circle cx="8.5" cy="8.5" r="5" fill="none" stroke="#e8e8e8" stroke-width="1.6"/><rect x="6" y="6.5" width="5.5" height="4" fill="#e8e8e8" transform="rotate(-20 8.5 8.5)"/></svg>
<div class="a" style="left:872px;top:102px;width:17px;height:17px;background:#151515;border-radius:2px;border:1px solid #3a3a3a;"></div><svg class="a" style="left:872px;top:102px" width="17" height="17" viewBox="0 0 17 17"><rect x="4.5" y="4.5" width="8" height="8" fill="#e8e8e8"/><path d="M2.5 2.5l3 3M14.5 2.5l-3 3M2.5 14.5l3-3M14.5 14.5l-3-3" stroke="#e8e8e8" stroke-width="1.6"/></svg>
<div class="a" style="left:892px;top:102px;width:17px;height:17px;background:#4a4a4a;border-radius:2px;"></div><svg class="a" style="left:892px;top:102px" width="17" height="17" viewBox="0 0 17 17"><circle cx="8.5" cy="8.5" r="5" fill="none" stroke="#e8e8e8" stroke-width="1.6"/><rect x="5.5" y="6.5" width="5.5" height="4" fill="#e8e8e8" transform="rotate(20 8.5 8.5)"/></svg>
<div class="a" style="left:918px;top:102px;width:17px;height:17px;background:#4a4a4a;border-radius:2px;"></div><svg class="a" style="left:918px;top:102px" width="17" height="17" viewBox="0 0 17 17"><rect x="3.5" y="6.5" width="4" height="7" fill="#e8e8e8"/><rect x="9.5" y="6.5" width="4" height="7" fill="none" stroke="#e8e8e8"/><path d="M5 5c0-3 7-3 7 0" fill="none" stroke="#e8e8e8"/></svg>
<div class="a" style="left:781px;top:106px;width:1px;height:10px;background:#555;"></div>
<div class="a" style="left:847px;top:106px;width:1px;height:10px;background:#555;"></div>
<div class="a" style="left:914px;top:106px;width:1px;height:10px;background:#555;"></div>
<div class="a" style="left:757px;top:122px;width:267px;height:41px;background:#4a4846;"></div>
<div class="a" style="left:863px;top:122px;width:55px;height:41px;background:#ffffff;"></div>
<svg class="a" style="left:863px;top:122px" width="55" height="41" viewBox="863 122 55 41"><g transform="translate(889,141) scale(0.09) translate(-469,-294)"><ellipse cx="417" cy="294" rx="13" ry="8.5" fill="#f39de0"/><ellipse cx="523" cy="292" rx="12.5" ry="8.5" fill="#f39de0"/><path d="M432.7 394.6 C368.8 392.9, 336.4 358.2, 336.4 295.1 C336.4 236.9, 381.4 178.6, 479.7 178.6 C530.5 178.6, 600.8 224.8, 600.8 292.7 C600.8 352.5, 562.9 408.6, 490.7 396.6" stroke="#a34842" stroke-width="3.8" fill="none" stroke-linecap="round"/><path d="M410 391.2 L436 392.3 L436 394.6 Z M410 396.9 L436 397.2 L436 394.6 Z" fill="#fff"/><path d="M516 395.3 L488 393.2 L488 396.6 Z M516 401.3 L488 400 L488 396.6 Z" fill="#fff"/><path d="M462.5 177 C464 165, 469 157, 475.5 151.5" stroke="#a34842" stroke-width="3" fill="none"/><path d="M475.5 151.5 C466 146, 460 137, 461 128 C462 121, 471 120, 476 126 C481 133, 480 143, 475.5 151.5Z" fill="#41bd2b" stroke="#a34842" stroke-width="2.8"/><path d="M475.5 151.5 C481 144, 489 139, 498 139 C506 139, 510 145, 509 151 C507 158, 498 160, 490 159 C483 158, 478 155, 475.5 151.5Z" fill="#41bd2b" stroke="#a34842" stroke-width="2.8"/><circle cx="432" cy="277.4" r="14.2" fill="#a54a3e"/><circle cx="503.6" cy="278.3" r="14.3" fill="#a54a3e"/><path d="M459 271 C450 274, 447 287, 457 288 C463 288, 466 283, 467 281 C469 286, 473 289, 477 288.5 C486 287, 487 274, 481 271" stroke="#a34842" stroke-width="2.6" fill="none" stroke-linecap="round"/><path d="M411.5 397 C407 430, 403 470, 400 501" stroke="#a34842" stroke-width="3.2" fill="none" stroke-linecap="round"/><path d="M517.5 404 C521 435, 523 470, 524 501" stroke="#a34842" stroke-width="3.2" fill="none" stroke-linecap="round"/><path d="M419 400 C430 415, 452 437, 450 447 C449 455, 441 455, 436 449 C428 440, 420 430, 415 422" stroke="#a34842" stroke-width="3.2" fill="none" stroke-linecap="round"/><path d="M496 408 C488 418, 476 433, 476 444 C476 452, 484 453, 490 448 C498 440, 508 428, 514 418" stroke="#a34842" stroke-width="3.2" fill="none" stroke-linecap="round"/><path d="M575 444 C580 435, 575 418.5, 564.5 418.5 C555 418.5, 552 436, 559.5 442 C564 445, 570 440, 568.5 432 C567 425, 560 424, 559.5 429 C559 434, 565 435, 567 430 L566.5 440" stroke="#a95b59" stroke-width="3.7" fill="none" stroke-linecap="round" stroke-linejoin="round"/><path d="M596 420.5 C588.5 420.5, 588 436.5, 596 436.5 C603.5 436.5, 603.5 420.5, 596 420.5Z" stroke="#a95b59" stroke-width="3.7" fill="none" stroke-linecap="round" stroke-linejoin="round"/><path d="M602.5 427 C602 440, 602 452, 599.5 458.5 C597 463, 590 461, 591 454 C592 447, 603 440, 609 437.5" stroke="#a95b59" stroke-width="3.7" fill="none" stroke-linecap="round" stroke-linejoin="round"/><path d="M613.7 425 C606.5 425, 606.5 438.5, 613.7 438.5 C620.5 438.5, 620.5 425, 613.7 425Z M610.5 437.5 L617.5 426" stroke="#a95b59" stroke-width="3.7" fill="none" stroke-linecap="round" stroke-linejoin="round"/><path d="M624.5 424.5 C625.5 432, 627.5 439.5, 631 439.5 C634.5 439.5, 637 431, 638.5 425 C639 431, 640 439, 643.5 439.5 C646.5 440, 649 436, 651 433" stroke="#a95b59" stroke-width="3.7" fill="none" stroke-linecap="round" stroke-linejoin="round"/><path d="M650 418.5 C651 425, 651.5 432, 652 438.5 M638.6 423.4 L657.2 422.5" stroke="#a95b59" stroke-width="3.7" fill="none" stroke-linecap="round" stroke-linejoin="round"/><path d="M656 434 C662 433.5, 674 431, 674.5 427 C675 423, 667 422, 663 425 C658 429, 659 441, 667 442 C671 442.5, 675 441, 677.5 439.5" stroke="#a95b59" stroke-width="3.7" fill="none" stroke-linecap="round" stroke-linejoin="round"/><path d="M560 464.6 L738 465" stroke="#a95b59" stroke-width="2.8"/><path d="M567.5 475.2 L596 477.4 M563.8 486.2 L595.3 486.2 M572.6 472.3 L573.3 498.6 M588 475.2 L584.3 498.6" stroke="#a95b59" stroke-width="3.2" fill="none" stroke-linecap="round" stroke-linejoin="round"/><path d="M608.5 473.7 L610 490.6 M609.2 480.3 L632 481 M628.2 475.9 L625.3 492" stroke="#a95b59" stroke-width="3.2" fill="none" stroke-linecap="round" stroke-linejoin="round"/><path d="M637 475.2 L637 489.1 M640 472.3 C650 473, 651 488, 641.4 489.1" stroke="#a95b59" stroke-width="3.2" fill="none" stroke-linecap="round" stroke-linejoin="round"/><path d="M657.5 475.9 C659 472, 665 472, 663.4 478 C662 482, 657 484, 657.5 486.9 L665.6 489.8" stroke="#a95b59" stroke-width="3.2" fill="none" stroke-linecap="round" stroke-linejoin="round"/><path d="M672.2 474.5 L669.3 482.5 L681 482.5 M676.6 475.9 L676.6 489.8" stroke="#a95b59" stroke-width="3.2" fill="none" stroke-linecap="round" stroke-linejoin="round"/><path d="M687.6 471.5 C691 471, 693 472, 692.7 474 C692 480, 690 486, 689 492.8 M687 482 L693 481" stroke="#a95b59" stroke-width="3.2" fill="none" stroke-linecap="round" stroke-linejoin="round"/></g></svg>
<div class="a" style="left:861px;top:123px;width:53px;height:37px;border:2px solid #e4211c"></div>
<div class="a" style="left:757px;top:163px;width:267px;height:3px;background:#1e1e1e;"></div>
<div class="a" style="left:757px;top:165px;width:267px;height:1px;background:#1d2933;"></div>
<div class="a" style="left:757px;top:167px;width:267px;height:15px;background:#373534;"></div>
<div class="a" style="left:757px;top:166px;width:267px;height:1px;background:#8099ae;"></div>
<div class="a" style="left:757px;top:167px;width:267px;height:1px;background:#414a53;"></div>
<div class="t" style="left:872.5px;top:170.5px;font-size:9.0px;color:#cfcfcf;;letter-spacing:-0.774px">Lớp</div>
<svg class="a" style="left:1001px;top:169px" width="9" height="9" viewBox="0 0 9 9"><path d="M5 1.5h-3.5v7h7v-3.5" stroke="#b8b8b8" fill="none" stroke-width="1.1"/><path d="M4.5 5L8 1.5M6 1h2.5v2.5" stroke="#b8b8b8" fill="none" stroke-width="1.1"/></svg>
<svg class="a" style="left:1013px;top:169.5px" width="8" height="8" viewBox="0 0 8 8"><path d="M1 1l6 6M7 1l-6 6" stroke="#dcdcdc" stroke-width="1.8"/></svg>
<div class="t" style="left:761.2px;top:189.0px;font-size:9.0px;color:#cfcfcf;;letter-spacing:-0.291px">Độ trong</div>
<div class="a" style="left:828px;top:187px;width:156px;height:11px;background:linear-gradient(to right,#86c8f6,#4e9ad8)"></div>
<div class="t" style="left:988.4px;top:189.0px;font-size:9.0px;color:#cfcfcf;;letter-spacing:-0.326px">100 %</div>
<div class="t" style="left:760.4px;top:209.0px;font-size:9.0px;color:#cfcfcf;;letter-spacing:-0.279px">Pha trộn</div>
<div class="a" style="left:830px;top:204px;width:189px;height:16px;background:#3e3e3e;border-radius:2px"></div>
<div class="t" style="left:831.3px;top:208.0px;font-size:9.0px;color:#cfcfcf;;letter-spacing:-0.552px">Bình thường</div>
<svg class="a" style="left:1009px;top:210px" width="6" height="4" viewBox="0 0 6 4"><path d="M0 0h6L3 3.5z" fill="#aaa"/></svg>
<div class="a" style="left:764px;top:227px;width:9px;height:9px;border:1px solid #bbb"></div>
<div class="t" style="left:775.6px;top:228.0px;font-size:9.0px;color:#cfcfcf;;letter-spacing:-0.412px">Bảo vệ alpha</div>
<div class="a" style="left:852px;top:227px;width:9px;height:9px;border:1px solid #444"></div>
<div class="t" style="left:863.1px;top:228.0px;font-size:9.0px;color:#6a6a6a;;letter-spacing:-0.432px">Xén bớt</div>
<div class="a" style="left:938px;top:227px;width:9px;height:9px;border:1px solid #bbb"></div>
<div class="t" style="left:949.8px;top:228.0px;font-size:9.0px;color:#cfcfcf;;letter-spacing:-0.333px">Khóa</div>
<div class="a" style="left:759px;top:241px;width:249px;height:105px;background:#4a4846;"></div>
<div class="a" style="left:759px;top:242px;width:14px;height:29px;background:#5c5a58;"></div>
<svg class="a" style="left:761px;top:251px" width="10" height="10" viewBox="0 0 10 10"><circle cx="5" cy="5" r="3.5" fill="#e6e6e6"/></svg>
<div class="a" style="left:773px;top:242px;width:234px;height:29px;background:#4e92cf;"></div>
<div class="a" style="left:785px;top:247px;width:25px;height:19px;background:#fff;background-image:linear-gradient(45deg,#e4e4e4 25%,transparent 25%,transparent 75%,#e4e4e4 75%),linear-gradient(45deg,#e4e4e4 25%,transparent 25%,transparent 75%,#e4e4e4 75%);background-size:6px 6px;background-position:0 0,3px 3px;border:1px solid #ccc"></div>
<svg class="a" style="left:785px;top:247px" width="25" height="19" viewBox="0 0 25 19"><circle cx="12" cy="10" r="6" fill="none" stroke="#d59a90" stroke-width="0.7"/><circle cx="10" cy="9.5" r="1" fill="#c08070"/><circle cx="14" cy="9.5" r="1" fill="#c08070"/></svg>
<div class="t" style="left:823.4px;top:251.0px;font-size:9.6px;color:#ffffff;font-weight:bold;;letter-spacing:-0.323px">Lớp1</div>
<svg class="a" style="left:991px;top:250px" width="14" height="14" viewBox="0 0 14 14"><circle cx="7" cy="7" r="4" fill="#fff"/><path d="M7 1v12M1 7h12M2.8 2.8l8.4 8.4M11.2 2.8l-8.4 8.4" stroke="#fff" stroke-width="2"/><circle cx="7" cy="7" r="1.6" fill="#4e92cf"/></svg>
<div class="a" style="left:1008px;top:241px;width:14px;height:106px;background:#2a2a2a;"></div>
<svg class="a" style="left:1010px;top:243px" width="10" height="6" viewBox="0 0 10 6"><path d="M1 5h8L5 1z" fill="#8a8a8a"/></svg>
<div class="a" style="left:1008.5px;top:250px;width:12px;height:88px;background:linear-gradient(to right,#727272,#5c5c5c);border-radius:5px"></div>
<svg class="a" style="left:1010px;top:339px" width="10" height="6" viewBox="0 0 10 6"><path d="M1 1h8L5 5z" fill="#8a8a8a"/></svg>
<div class="a" style="left:757px;top:347px;width:267px;height:22px;background:#252525;"></div>
<div class="a" style="left:761px;top:349px;width:17px;height:18px;background:#4a4a4a;border-radius:2px;"></div><svg class="a" style="left:761px;top:349px" width="17" height="18" viewBox="0 0 17 18"><path d="M4.5 3.5h5l3 3v8h-8z" stroke="#e8e8e8" fill="none"/></svg>
<div class="a" style="left:782px;top:349px;width:17px;height:18px;background:#4a4a4a;border-radius:2px;"></div><svg class="a" style="left:782px;top:349px" width="17" height="18" viewBox="0 0 17 18"><path d="M4.5 3.5h5l3 3v8h-8z" stroke="#e8e8e8" fill="none"/><rect x="6.5" y="8.5" width="4" height="4" stroke="#e8e8e8" fill="none"/><path d="M7.5 8.5v-1.5a1 1 0 0 1 2 0v1.5" stroke="#e8e8e8" fill="none"/></svg>
<div class="a" style="left:802px;top:349px;width:17px;height:18px;background:#4a4a4a;border-radius:2px;"></div><svg class="a" style="left:802px;top:349px" width="17" height="18" viewBox="0 0 17 18"><path d="M4.5 3.5h5l3 3v8h-8z" stroke="#e8e8e8" fill="none"/><path d="M8.5 13V8M7 9.5l1.5-1.5 1.5 1.5" stroke="#e8e8e8" fill="none"/></svg>
<div class="a" style="left:823px;top:349px;width:22px;height:18px;background:#4a4a4a;border-radius:2px;"></div><svg class="a" style="left:823px;top:349px" width="22" height="18" viewBox="0 0 22 18"><path d="M4.5 3.5h5l3 3v8h-8z" stroke="#e8e8e8" fill="none"/><path d="M9 10v5M6.5 12.5h5" stroke="#e8e8e8" stroke-width="1.5"/><path d="M15 8h5l-2.5 3z" fill="#e8e8e8"/></svg>
<div class="a" style="left:848px;top:349px;width:17px;height:18px;background:#4a4a4a;border-radius:2px;"></div><svg class="a" style="left:848px;top:349px" width="17" height="18" viewBox="0 0 17 18"><path d="M2.5 5h4.5l1 1.5h6.5v7.5h-12z" fill="#e8e8e8"/></svg>
<div class="a" style="left:873px;top:349px;width:17px;height:18px;background:#4a4a4a;border-radius:2px;"></div><svg class="a" style="left:873px;top:349px" width="17" height="18" viewBox="0 0 17 18"><rect x="3.5" y="6.5" width="8" height="8" stroke="#e8e8e8" fill="none"/><path d="M6.5 6.5v-3h8v8h-3" stroke="#e8e8e8" fill="none"/></svg>
<div class="a" style="left:894px;top:349px;width:17px;height:18px;background:#151515;border-radius:2px;border:1px solid #3a3a3a;"></div><svg class="a" style="left:894px;top:349px" width="17" height="18" viewBox="0 0 17 18"><rect x="3" y="3" width="4" height="4" fill="#e8e8e8"/><rect x="3" y="10" width="4" height="4" fill="#e8e8e8"/><rect x="10" y="6" width="5" height="5" fill="#e8e8e8"/><path d="M7 5h2v6h-2" fill="none" stroke="#e8e8e8"/></svg>
<div class="a" style="left:920px;top:349px;width:17px;height:18px;background:#151515;border-radius:2px;border:1px solid #3a3a3a;"></div><svg class="a" style="left:920px;top:349px" width="17" height="18" viewBox="0 0 17 18"><path d="M3.5 5.5h10M7 5.5V3.5h3v2" fill="none" stroke="#e8e8e8" stroke-width="1"/><path d="M5 6.5h7v8.5H5z" fill="none" stroke="#e8e8e8" stroke-width="1"/><path d="M7 8v5.5M8.5 8v5.5M10 8v5.5" stroke="#e8e8e8" stroke-width="0.9"/></svg>
<div class="a" style="left:869px;top:353px;width:1px;height:10px;background:#555;"></div>
<div class="a" style="left:915px;top:353px;width:1px;height:10px;background:#555;"></div>
<div class="a" style="left:757px;top:369px;width:267px;height:6px;background:#1e1e1e;"></div>
<div class="a" style="left:757px;top:374px;width:267px;height:1px;background:#1d2933;"></div>
<div class="a" style="left:757px;top:376px;width:267px;height:15px;background:#373534;"></div>
<div class="a" style="left:757px;top:375px;width:267px;height:1px;background:#8099ae;"></div>
<div class="a" style="left:757px;top:376px;width:267px;height:1px;background:#414a53;"></div>
<div class="t" style="left:860.5px;top:379.5px;font-size:9.0px;color:#cfcfcf;;letter-spacing:-0.603px">Brush Size</div>
<svg class="a" style="left:1001px;top:378px" width="9" height="9" viewBox="0 0 9 9"><path d="M5 1.5h-3.5v7h7v-3.5" stroke="#b8b8b8" fill="none" stroke-width="1.1"/><path d="M4.5 5L8 1.5M6 1h2.5v2.5" stroke="#b8b8b8" fill="none" stroke-width="1.1"/></svg>
<svg class="a" style="left:1013px;top:378.5px" width="8" height="8" viewBox="0 0 8 8"><path d="M1 1l6 6M7 1l-6 6" stroke="#dcdcdc" stroke-width="1.8"/></svg>
<div class="a" style="left:757px;top:391px;width:252px;height:140px;background:#4a4846;"></div>
<div class="a" style="left:757px;top:391px;width:241px;height:112px;background:#3e3c3a;"></div>
<div class="a" style="left:758px;top:391px;width:29px;height:36px;background:#5a5856;"></div>
<svg class="a" style="left:758px;top:391px" width="29" height="36" viewBox="0 0 29 36"><circle cx="14.5" cy="14" r="0.4" fill="#bdbdbd"/></svg>
<div class="t" style="left:758px;width:29px;text-align:center;top:420.5px;font-size:7.6px;color:#f0f0f0;letter-spacing:-0.2px">1</div>
<div class="a" style="left:788px;top:391px;width:29px;height:36px;background:#5a5856;"></div>
<svg class="a" style="left:788px;top:391px" width="29" height="36" viewBox="0 0 29 36"><circle cx="14.5" cy="14" r="0.6" fill="#bdbdbd"/></svg>
<div class="t" style="left:788px;width:29px;text-align:center;top:420.5px;font-size:7.6px;color:#f0f0f0;letter-spacing:-0.2px">1.5</div>
<div class="a" style="left:818px;top:391px;width:29px;height:36px;background:#5a5856;"></div>
<svg class="a" style="left:818px;top:391px" width="29" height="36" viewBox="0 0 29 36"><circle cx="14.5" cy="14" r="0.8" fill="#bdbdbd"/></svg>
<div class="t" style="left:818px;width:29px;text-align:center;top:420.5px;font-size:7.6px;color:#f0f0f0;letter-spacing:-0.2px">2</div>
<div class="a" style="left:848px;top:391px;width:29px;height:36px;background:#5a5856;"></div>
<svg class="a" style="left:848px;top:391px" width="29" height="36" viewBox="0 0 29 36"><circle cx="14.5" cy="14" r="1.1" fill="#f0f0f0"/></svg>
<div class="t" style="left:848px;width:29px;text-align:center;top:420.5px;font-size:7.6px;color:#f0f0f0;letter-spacing:-0.2px">3</div>
<div class="a" style="left:878px;top:391px;width:29px;height:36px;background:#5a5856;"></div>
<svg class="a" style="left:878px;top:391px" width="29" height="36" viewBox="0 0 29 36"><circle cx="14.5" cy="14" r="1.4" fill="#f0f0f0"/></svg>
<div class="t" style="left:878px;width:29px;text-align:center;top:420.5px;font-size:7.6px;color:#f0f0f0;letter-spacing:-0.2px">4</div>
<div class="a" style="left:908px;top:391px;width:29px;height:36px;background:#5a5856;"></div>
<svg class="a" style="left:908px;top:391px" width="29" height="36" viewBox="0 0 29 36"><circle cx="14.5" cy="14" r="1.6" fill="#f0f0f0"/></svg>
<div class="t" style="left:908px;width:29px;text-align:center;top:420.5px;font-size:7.6px;color:#f0f0f0;letter-spacing:-0.2px">5</div>
<div class="a" style="left:938px;top:391px;width:29px;height:36px;background:#5a5856;"></div>
<svg class="a" style="left:938px;top:391px" width="29" height="36" viewBox="0 0 29 36"><circle cx="14.5" cy="14" r="2.3" fill="#f0f0f0"/></svg>
<div class="t" style="left:938px;width:29px;text-align:center;top:420.5px;font-size:7.6px;color:#f0f0f0;letter-spacing:-0.2px">7</div>
<div class="a" style="left:968px;top:391px;width:29px;height:36px;background:#5a5856;"></div>
<svg class="a" style="left:968px;top:391px" width="29" height="36" viewBox="0 0 29 36"><circle cx="14.5" cy="14" r="3.3" fill="#f0f0f0"/></svg>
<div class="t" style="left:968px;width:29px;text-align:center;top:420.5px;font-size:7.6px;color:#f0f0f0;letter-spacing:-0.2px">10</div>
<div class="a" style="left:758px;top:428px;width:29px;height:36px;background:#5a5856;"></div>
<svg class="a" style="left:758px;top:428px" width="29" height="36" viewBox="0 0 29 36"><circle cx="14.5" cy="15" r="4.8" fill="#f0f0f0"/></svg>
<div class="t" style="left:758px;width:29px;text-align:center;top:457.5px;font-size:7.6px;color:#f0f0f0;letter-spacing:-0.2px">12</div>
<div class="a" style="left:788px;top:428px;width:29px;height:36px;background:#5a5856;"></div>
<svg class="a" style="left:788px;top:428px" width="29" height="36" viewBox="0 0 29 36"><circle cx="14.5" cy="15" r="5.5" fill="#f0f0f0"/></svg>
<div class="t" style="left:788px;width:29px;text-align:center;top:457.5px;font-size:7.6px;color:#f0f0f0;letter-spacing:-0.2px">15</div>
<div class="a" style="left:818px;top:428px;width:29px;height:36px;background:#5a5856;"></div>
<svg class="a" style="left:818px;top:428px" width="29" height="36" viewBox="0 0 29 36"><circle cx="14.5" cy="15" r="8.0" fill="#f0f0f0"/></svg>
<div class="t" style="left:818px;width:29px;text-align:center;top:457.5px;font-size:7.6px;color:#f0f0f0;letter-spacing:-0.2px">20</div>
<div class="a" style="left:848px;top:428px;width:29px;height:36px;background:#5a5856;"></div>
<svg class="a" style="left:848px;top:428px" width="29" height="36" viewBox="0 0 29 36"><circle cx="14.5" cy="15" r="9.0" fill="#f0f0f0"/></svg>
<div class="t" style="left:848px;width:29px;text-align:center;top:457.5px;font-size:7.6px;color:#f0f0f0;letter-spacing:-0.2px">25</div>
<div class="a" style="left:878px;top:428px;width:29px;height:36px;background:#5a5856;"></div>
<svg class="a" style="left:878px;top:428px" width="29" height="36" viewBox="0 0 29 36"><circle cx="14.5" cy="15" r="9.0" fill="#f0f0f0"/></svg>
<div class="t" style="left:878px;width:29px;text-align:center;top:457.5px;font-size:7.6px;color:#f0f0f0;letter-spacing:-0.2px">30</div>
<div class="a" style="left:908px;top:428px;width:29px;height:36px;background:#5a5856;"></div>
<svg class="a" style="left:908px;top:428px" width="29" height="36" viewBox="0 0 29 36"><circle cx="14.5" cy="15" r="9.0" fill="#f0f0f0"/></svg>
<div class="t" style="left:908px;width:29px;text-align:center;top:457.5px;font-size:7.6px;color:#f0f0f0;letter-spacing:-0.2px">40</div>
<div class="a" style="left:938px;top:428px;width:29px;height:36px;background:#5a5856;"></div>
<svg class="a" style="left:938px;top:428px" width="29" height="36" viewBox="0 0 29 36"><circle cx="14.5" cy="15" r="9.0" fill="#f0f0f0"/></svg>
<div class="t" style="left:938px;width:29px;text-align:center;top:457.5px;font-size:7.6px;color:#f0f0f0;letter-spacing:-0.2px">50</div>
<div class="a" style="left:968px;top:428px;width:29px;height:36px;background:#5a5856;"></div>
<svg class="a" style="left:968px;top:428px" width="29" height="36" viewBox="0 0 29 36"><circle cx="14.5" cy="15" r="9.0" fill="#f0f0f0"/></svg>
<div class="t" style="left:968px;width:29px;text-align:center;top:457.5px;font-size:7.6px;color:#f0f0f0;letter-spacing:-0.2px">70</div>
<div class="a" style="left:758px;top:466px;width:29px;height:36px;background:#5a5856;"></div>
<svg class="a" style="left:758px;top:466px" width="29" height="36" viewBox="0 0 29 36"><circle cx="14.5" cy="15" r="9.0" fill="#f0f0f0"/></svg>
<div class="t" style="left:758px;width:29px;text-align:center;top:495.5px;font-size:7.6px;color:#f0f0f0;letter-spacing:-0.2px">100</div>
<div class="a" style="left:788px;top:466px;width:29px;height:36px;background:#5a5856;"></div>
<svg class="a" style="left:788px;top:466px" width="29" height="36" viewBox="0 0 29 36"><circle cx="14.5" cy="15" r="9.0" fill="#f0f0f0"/></svg>
<div class="t" style="left:788px;width:29px;text-align:center;top:495.5px;font-size:7.6px;color:#f0f0f0;letter-spacing:-0.2px">150</div>
<div class="a" style="left:818px;top:466px;width:29px;height:36px;background:#5a5856;"></div>
<svg class="a" style="left:818px;top:466px" width="29" height="36" viewBox="0 0 29 36"><circle cx="14.5" cy="15" r="9.0" fill="#f0f0f0"/></svg>
<div class="t" style="left:818px;width:29px;text-align:center;top:495.5px;font-size:7.6px;color:#f0f0f0;letter-spacing:-0.2px">200</div>
<div class="a" style="left:848px;top:466px;width:29px;height:36px;background:#5a5856;"></div>
<svg class="a" style="left:848px;top:466px" width="29" height="36" viewBox="0 0 29 36"><circle cx="14.5" cy="15" r="9.0" fill="#f0f0f0"/></svg>
<div class="t" style="left:848px;width:29px;text-align:center;top:495.5px;font-size:7.6px;color:#f0f0f0;letter-spacing:-0.2px">300</div>
<div class="a" style="left:878px;top:466px;width:29px;height:36px;background:#5a5856;"></div>
<svg class="a" style="left:878px;top:466px" width="29" height="36" viewBox="0 0 29 36"><circle cx="14.5" cy="15" r="9.0" fill="#f0f0f0"/></svg>
<div class="t" style="left:878px;width:29px;text-align:center;top:495.5px;font-size:7.6px;color:#f0f0f0;letter-spacing:-0.2px">400</div>
<div class="a" style="left:908px;top:466px;width:29px;height:36px;background:#5a5856;"></div>
<svg class="a" style="left:908px;top:466px" width="29" height="36" viewBox="0 0 29 36"><circle cx="14.5" cy="15" r="9.0" fill="#f0f0f0"/></svg>
<div class="t" style="left:908px;width:29px;text-align:center;top:495.5px;font-size:7.6px;color:#f0f0f0;letter-spacing:-0.2px">500</div>
<div class="a" style="left:938px;top:466px;width:29px;height:36px;background:#5a5856;"></div>
<svg class="a" style="left:938px;top:466px" width="29" height="36" viewBox="0 0 29 36"><circle cx="14.5" cy="15" r="9.0" fill="#f0f0f0"/></svg>
<div class="t" style="left:938px;width:29px;text-align:center;top:495.5px;font-size:7.6px;color:#f0f0f0;letter-spacing:-0.2px">700</div>
<div class="a" style="left:968px;top:466px;width:29px;height:36px;background:#5a5856;"></div>
<svg class="a" style="left:968px;top:466px" width="29" height="36" viewBox="0 0 29 36"><circle cx="14.5" cy="15" r="9.0" fill="#f0f0f0"/></svg>
<div class="t" style="left:968px;width:29px;text-align:center;top:495.5px;font-size:7.6px;color:#f0f0f0;letter-spacing:-0.2px">1000</div>
<div class="a" style="left:1010px;top:391px;width:14px;height:140px;background:#2a2a2a;"></div>
<svg class="a" style="left:1012px;top:393px" width="10" height="6" viewBox="0 0 10 6"><path d="M1 5h8L5 1z" fill="#8a8a8a"/></svg>
<div class="a" style="left:1010px;top:398px;width:12px;height:124px;background:linear-gradient(to right,#727272,#5c5c5c);border-radius:5px"></div>
<svg class="a" style="left:1012px;top:523px" width="10" height="6" viewBox="0 0 10 6"><path d="M1 1h8L5 5z" fill="#8a8a8a"/></svg>
<div class="a" style="left:0px;top:531px;width:1024px;height:14px;background:#252525;"></div>
<div class="t" style="left:4.5px;top:534.6px;font-size:10.0px;color:#cdcdcd;;letter-spacing:-0.700px">1600 * 1200 pixel</div>
<div class="t" style="left:76.5px;top:534.6px;font-size:10.0px;color:#cdcdcd;;letter-spacing:-0.533px">(11.6 * 8.7cm)</div>
<div class="t" style="left:136.5px;top:534.6px;font-size:10.0px;color:#cdcdcd;;letter-spacing:-0.573px">350 dpi</div>
<div class="t" style="left:172.5px;top:534.6px;font-size:10.0px;color:#cdcdcd;;letter-spacing:-1.249px">50 %</div>
<div class="t" style="left:197.5px;top:534.6px;font-size:10.0px;color:#cdcdcd;;letter-spacing:-0.819px">( 1410, 1049 )</div>
<div class="t" style="left:256px;top:534.6px;font-size:10.0px;color:#cdcdcd;;letter-spacing:-0.513px">Vẽ một đường thẳng bằng cách giữ phím Shift, Thay đổi cỡ cọ bằng cách giữ phím Ctrl, Alt và kéo</div>
<div class="a" style="left:0px;top:545px;width:1024px;height:31px;background:#331b1b;"></div>
<svg class="a" style="left:12px;top:555px" width="13" height="13" viewBox="0 0 13 13"><path d="M0 1.8L5.3 1.1V6.2H0zM6 1L13 0V6.2H6zM0 6.9H5.3V12L0 11.3zM6 6.9H13V13L6 12z" fill="#f4f4f4"/></svg>
<svg class="a" style="left:47px;top:554px" width="15" height="15" viewBox="0 0 15 15"><circle cx="9" cy="6" r="4.3" fill="none" stroke="#e8e8e8" stroke-width="1.3"/><path d="M6 9L1.5 13.5" stroke="#e8e8e8" stroke-width="1.5"/></svg>
<svg class="a" style="left:83px;top:554px" width="14" height="14" viewBox="0 0 14 14"><circle cx="7" cy="7" r="5.3" fill="none" stroke="#f0f0f0" stroke-width="1.8"/></svg>
<svg class="a" style="left:119px;top:552px" width="18" height="18" viewBox="0 0 18 18"><circle cx="9" cy="9" r="8" fill="#8cc63f"/><circle cx="9" cy="9.5" r="4.5" fill="none" stroke="#fff" stroke-width="1.8"/><circle cx="9" cy="9.5" r="1.5" fill="#fff"/><path d="M11 1l3 4 2-2z" fill="#e6333a"/></svg>
<svg class="a" style="left:155px;top:553px" width="18" height="16" viewBox="0 0 18 16"><path d="M1 2h6l2 2h8v10H1z" fill="#f0c23b"/><path d="M1 5h16v9H1z" fill="#f8d775"/><rect x="5" y="10" width="8" height="4" fill="#3b8ee0"/></svg>
<svg class="a" style="left:192px;top:555px" width="21" height="11" viewBox="0 0 21 11"><path d="M0.5 1h3l2 6 2-6h2.5l-3.5 9H4z" fill="#d8262f"/><path d="M9.5 1h6.5l-.5 2h-2l-2 7H9l2-7H9z" fill="#c9303a"/><path d="M14.5 1h2.5l1 6 2.5-6h1l-3.8 9h-2z" fill="#2b56b8"/></svg>
<svg class="a" style="left:229px;top:552px" width="19" height="19" viewBox="0 0 19 19"><defs><linearGradient id="eg" x1="0" y1="0" x2="0.3" y2="1"><stop offset="0" stop-color="#3bc3e8"/><stop offset="0.5" stop-color="#1d86d8"/><stop offset="1" stop-color="#0f5fb0"/></linearGradient><linearGradient id="eg2" x1="0" y1="0" x2="1" y2="0"><stop offset="0" stop-color="#3fbf8a"/><stop offset="1" stop-color="#7bd84a"/></linearGradient></defs><circle cx="9.5" cy="9.5" r="8.5" fill="url(#eg)"/><path d="M4 9c1-4 5-6 9-5 3 1 5 4 4.5 6.5-1 1.5-3.5 1.8-5.5 1.2z" fill="url(#eg2)"/><ellipse cx="12" cy="11.5" rx="3.3" ry="2.4" fill="#331b1b"/><path d="M6.5 11c0 3 2.5 5 6 5" stroke="#0f5fb0" stroke-width="0" fill="none"/></svg>
<svg class="a" style="left:266px;top:552px" width="19" height="19" viewBox="0 0 19 19"><circle cx="9.5" cy="9.5" r="8.5" fill="#db4437"/><path d="M9.5 9.5L2.1 5.25A8.5 8.5 0 0 0 5.25 16.86z" fill="#0f9d58"/><path d="M9.5 9.5L5.25 16.86A8.5 8.5 0 0 0 17.9 9.5z" fill="#f4b400"/><path d="M9.5 9.5L17.9 9.5 A8.5 8.5 0 0 0 15 3z" fill="#db4437"/><circle cx="9.5" cy="9.5" r="4" fill="#fff"/><circle cx="9.5" cy="9.5" r="3.1" fill="#4285f4"/></svg>
<div class="a" style="left:294px;top:545px;width:36px;height:31px;background:#4a3b3b;"></div>
<svg class="a" style="left:302px;top:551px" width="20" height="20" viewBox="0 0 20 20"><rect x="0.5" y="0.5" width="19" height="19" rx="4" fill="#f6f6f6"/><path d="M10 3.5c3.5 2.5 5.5 5.5 5.5 8.2a5.5 5.5 0 0 1-11 0c0-2.7 2-5.7 5.5-8.2z" fill="#28b392"/><path d="M10 3.5c-3.5 2.5-5.5 5.5-5.5 8.2 0 1 .3 2 .8 2.8L10 9z" fill="#e8412c"/><path d="M10 3.5L10 9 15.3 10.5c-.6-2.3-2.4-4.7-5.3-7z" fill="#f5a21b"/><ellipse cx="10.5" cy="12.5" rx="2.8" ry="2.6" fill="#1b7fc4"/></svg>
<div class="a" style="left:261px;top:574px;width:31px;height:2px;background:#8aa8c8;"></div>
<div class="a" style="left:294px;top:574px;width:36px;height:2px;background:#a8c4e4;"></div>
<svg class="a" style="left:841px;top:556px" width="12" height="11" viewBox="0 0 12 11"><rect x="0.5" y="0.5" width="11" height="10" rx="3" fill="#1e88e5"/><rect x="2.5" y="3" width="7" height="5" rx="1.5" fill="#fff"/></svg>
<svg class="a" style="left:859px;top:556px" width="12" height="11" viewBox="0 0 12 11"><path d="M1 10a9 9 0 0 1 9-9M3.5 10a6.5 6.5 0 0 1 6.5-6.5M6 10a4 4 0 0 1 4-4" fill="none" stroke="#ddd" stroke-width="1"/><circle cx="9.5" cy="9.5" r="1.3" fill="#eee"/></svg>
<svg class="a" style="left:876px;top:555px" width="13" height="12" viewBox="0 0 13 12"><path d="M1 4h2.5l3-3v10l-3-3H1z" fill="none" stroke="#ddd"/><path d="M8.5 4c1 1 1 3 0 4M10.5 2.5c2 2 2 5 0 7" fill="none" stroke="#ddd"/></svg>
<svg class="a" style="left:893px;top:556px" width="14" height="11" viewBox="0 0 14 11"><rect x="4.5" y="3.5" width="9" height="6" fill="none" stroke="#ddd"/><path d="M1 1l2 2v3h2" fill="none" stroke="#ddd"/></svg>
<div class="t" style="left:916.5px;top:556.0px;font-size:9.0px;color:#e6e6e6;;letter-spacing:-0.505px">VIE</div>
<div class="t" style="left:944px;top:550.0px;font-size:9.0px;color:#e6e6e6;;letter-spacing:-0.219px">3:31 PM</div>
<div class="t" style="left:942px;top:563.0px;font-size:9.0px;color:#e6e6e6;;letter-spacing:-0.006px">8/2/2021</div>
<svg class="a" style="left:991px;top:552px" width="22" height="20" viewBox="0 0 22 20"><rect x="2" y="1.5" width="12" height="10" fill="#f0f0f0"/><path d="M3 11.5v3l3-3z" fill="#f0f0f0"/><path d="M4 4h8M4 6.5h8M4 9h6" stroke="#331b1b" stroke-width="1"/><circle cx="15" cy="13" r="5.5" fill="#331b1b" stroke="#bbb" stroke-width="1"/><text x="15" y="16.5" font-family="Liberation Sans" font-size="9" fill="#f0f0f0" text-anchor="middle">2</text></svg>
<div class="a" style="left:1020px;top:548px;width:1px;height:25px;background:#6a5a5a;"></div>
</body></html>
